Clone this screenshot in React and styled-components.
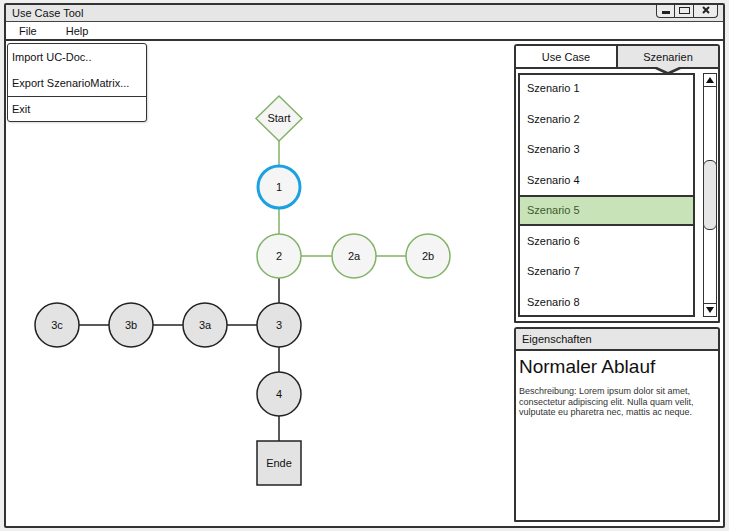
import React from 'react'
import styled, { createGlobalStyle } from 'styled-components'

const GlobalStyle = createGlobalStyle`
    html, body {
        margin: 0;
        padding: 0;
        background: #efefef;
        font-family: "Liberation Sans", Arial, sans-serif;
        color: #111;
    }
    * { box-sizing: border-box; }
`

const Window = styled.div`
    margin: 3px 0 0 4px;
    width: 721px;
    height: 525px;
    border: 2px solid #333;
    border-radius: 2px;
    background: #fff;
    display: flex;
    flex-direction: column;
    overflow: hidden;
`

const TitleBar = styled.div`
    height: 17px;
    background: #e6e6e6;
    border-bottom: 1px solid #444;
    display: flex;
    align-items: center;
    justify-content: space-between;
    padding-left: 6px;
    font-size: 11px;
`

const Controls = styled.div`
    display: flex;
    align-self: flex-start;
    margin: -2px 5px 0 0;
    height: 15px;
    border: 1.5px solid #333;
    border-top: none;
    border-radius: 0 0 4px 4px;
    background: #ececec;
`

const ControlButton = styled.div`
    width: ${p => p.$w}px;
    display: flex;
    align-items: center;
    justify-content: center;
    & + & { border-left: 1.5px solid #333; }
`

const MinGlyph = styled.span`
    width: 8px;
    height: 2.5px;
    background: #222;
    margin-top: 5px;
`

const MaxGlyph = styled.span`
    width: 11px;
    height: 7px;
    border: 1.5px solid #222;
`

const MenuBar = styled.div`
    height: 19px;
    border-bottom: 2px solid #333;
    display: flex;
    align-items: center;
    gap: 29px;
    padding-left: 13px;
    font-size: 11px;
`

const Body = styled.div`
    flex: 1;
    display: flex;
    min-height: 0;
`

const Canvas = styled.div`
    flex: 1;
    position: relative;
`

const DropMenu = styled.div`
    position: absolute;
    left: 1px;
    top: 2px;
    width: 140px;
    border: 1.5px solid #333;
    border-radius: 3px;
    background: #fff;
    font-size: 11px;
    box-shadow: 1px 1px 2px rgba(0, 0, 0, 0.15);
`

const DropItem = styled.div`
    height: ${p => p.$h || 26}px;
    display: flex;
    align-items: center;
    padding-left: 4px;
    ${p => p.$divided && 'border-top: 1.5px solid #333;'}
`

const Sidebar = styled.div`
    width: 211px;
    padding: 3px 3px 4px 2px;
    display: flex;
    flex-direction: column;
    gap: 4px;
`

const Panel = styled.div`
    border: 2px solid #333;
    border-radius: 3px 3px 1px 1px;
    display: flex;
    flex-direction: column;
    ${p => p.$grow ? 'flex: 1;' : `height: ${p.$h}px;`}
`

const Tabs = styled.div`
    display: flex;
    height: 23px;
    border-bottom: 2px solid #333;
`

const Tab = styled.div`
    flex: 1;
    position: relative;
    display: flex;
    align-items: center;
    justify-content: center;
    font-size: 11px;
    background: ${p => p.$active ? '#e6e6e6' : '#fff'};
    & + & { border-left: 2px solid #333; }
    ${p => p.$active && `
        &::before {
            content: '';
            position: absolute;
            left: 50%;
            bottom: -8px;
            margin-left: -13px;
            border-left: 13px solid transparent;
            border-right: 13px solid transparent;
            border-top: 6px solid #333;
            z-index: 1;
        }
        &::after {
            content: '';
            position: absolute;
            left: 50%;
            bottom: -5px;
            margin-left: -11px;
            border-left: 11px solid transparent;
            border-right: 11px solid transparent;
            border-top: 5px solid #e6e6e6;
            z-index: 2;
        }
    `}
`

const TabBody = styled.div`
    flex: 1;
    display: flex;
    gap: 8px;
    padding: 4px 1px 4px 2px;
    min-height: 0;
`

const ListBox = styled.div`
    flex: 1;
    border: 2px solid #333;
    overflow: hidden;
`

const ListInner = styled.div`
    margin-top: -2px;
`

const ListItem = styled.div`
    height: 30.5px;
    display: flex;
    align-items: center;
    padding-left: 7px;
    font-size: 11px;
    ${p => p.$selected && `
        background: #c9e3b9;
        color: #3d5a2d;
        border-top: 2px solid #333;
        border-bottom: 2px solid #333;
    `}
`

const Scrollbar = styled.div`
    width: 14px;
    border: 1.5px solid #333;
    display: flex;
    flex-direction: column;
    background: #fff;
`

const ScrollButton = styled.div`
    height: 13px;
    display: flex;
    align-items: center;
    justify-content: center;
    ${p => p.$top ? 'border-bottom: 1.5px solid #333;' : 'border-top: 1.5px solid #333; margin-top: auto;'}
`

const Arrow = styled.span`
    width: 0;
    height: 0;
    border-left: 4px solid transparent;
    border-right: 4px solid transparent;
    ${p => p.$up ? 'border-bottom: 6px solid #111;' : 'border-top: 6px solid #111;'}
`

const Thumb = styled.div`
    margin-top: 73px;
    height: 70px;
    margin-left: -1px;
    margin-right: -1px;
    border: 1.5px solid #333;
    border-radius: 6px;
    background: #e6e6e6;
`

const PanelHeader = styled.div`
    height: 22px;
    background: #e6e6e6;
    border-bottom: 2px solid #333;
    display: flex;
    align-items: center;
    padding-left: 6px;
    font-size: 11px;
`

const PanelContent = styled.div`
    padding: 5px 4px 4px 3px;
`

const Heading = styled.div`
    font-size: 19px;
    line-height: 22px;
`

const Description = styled.p`
    margin: 8px 0 0;
    font-size: 9px;
    line-height: 10.5px;
    color: #333;
`

const green = '#82b366'
const dark = '#222'

const nodes = [
    { id: '2', x: 279, y: 256, kind: 'green' },
    { id: '2a', x: 354, y: 256, kind: 'green' },
    { id: '2b', x: 428, y: 256, kind: 'green' },
    { id: '3', x: 279, y: 325, kind: 'gray' },
    { id: '3a', x: 205, y: 325, kind: 'gray' },
    { id: '3b', x: 131, y: 325, kind: 'gray' },
    { id: '3c', x: 57, y: 325, kind: 'gray' },
    { id: '4', x: 279, y: 394, kind: 'gray' },
]

const edges = [
    [279, 141, 279, 165, green],
    [279, 209, 279, 234, green],
    [301, 256, 332, 256, green],
    [376, 256, 406, 256, green],
    [279, 278, 279, 303, dark],
    [257, 325, 227, 325, dark],
    [183, 325, 153, 325, dark],
    [109, 325, 79, 325, dark],
    [279, 347, 279, 372, dark],
    [279, 416, 279, 441, dark],
]

const Label = ({ x, y, children }) => (
    <text x={x} y={y + 4} textAnchor="middle" fontSize="11" fontFamily="Liberation Sans, Arial, sans-serif" fill="#111">
        {children}
    </text>
)

const Diagram = () => (
    <svg width="506" height="485" viewBox="6 41 506 485">
        {edges.map(([x1, y1, x2, y2, c], i) => (
            <line key={i} x1={x1} y1={y1} x2={x2} y2={y2} stroke={c} strokeWidth="1.5" />
        ))}
        <polygon points="279,96 302,118.5 279,141 256,118.5" fill="#f5f5f5" stroke={green} strokeWidth="1.5" />
        <Label x={279} y={118}>Start</Label>
        <circle cx="279" cy="187" r="21" fill="#f5f5f5" stroke="#1ba1e2" strokeWidth="3" />
        <Label x={279} y={187}>1</Label>
        {nodes.map(n => (
            <g key={n.id}>
                <circle
                    cx={n.x}
                    cy={n.y}
                    r="22"
                    fill={n.kind === 'green' ? '#f5f5f5' : '#e3e3e3'}
                    stroke={n.kind === 'green' ? green : dark}
                    strokeWidth="1.5"
                />
                <Label x={n.x} y={n.y}>{n.id}</Label>
            </g>
        ))}
        <rect x="257" y="441" width="44" height="44" fill="#e3e3e3" stroke={dark} strokeWidth="1.5" />
        <Label x={279} y={463}>Ende</Label>
    </svg>
)

const scenarios = [1, 2, 3, 4, 5, 6, 7, 8]

const App = () => (
    <>
        <GlobalStyle />
        <Window>
            <TitleBar>
                <span>Use Case Tool</span>
                <Controls>
                    <ControlButton $w={17}><MinGlyph /></ControlButton>
                    <ControlButton $w={19}><MaxGlyph /></ControlButton>
                    <ControlButton $w={24}>
                        <svg width="8" height="8" viewBox="0 0 8 8">
                            <path d="M1 1 L7 7 M7 1 L1 7" stroke="#222" strokeWidth="2" />
                        </svg>
                    </ControlButton>
                </Controls>
            </TitleBar>
            <MenuBar>
                <span>File</span>
                <span>Help</span>
            </MenuBar>
            <Body>
                <Canvas>
                    <Diagram />
                    <DropMenu>
                        <DropItem>Import UC-Doc..</DropItem>
                        <DropItem>Export SzenarioMatrix...</DropItem>
                        <DropItem $divided $h={25}>Exit</DropItem>
                    </DropMenu>
                </Canvas>
                <Sidebar>
                    <Panel $h={279}>
                        <Tabs>
                            <Tab>Use Case</Tab>
                            <Tab $active>Szenarien</Tab>
                        </Tabs>
                        <TabBody>
                            <ListBox>
                                <ListInner>
                                    {scenarios.map(n => (
                                        <ListItem key={n} $selected={n === 5}>Szenario {n}</ListItem>
                                    ))}
                                </ListInner>
                            </ListBox>
                            <Scrollbar>
                                <ScrollButton $top><Arrow $up /></ScrollButton>
                                <Thumb />
                                <ScrollButton><Arrow /></ScrollButton>
                            </Scrollbar>
                        </TabBody>
                    </Panel>
                    <Panel $grow>
                        <PanelHeader>Eigenschaften</PanelHeader>
                        <PanelContent>
                            <Heading>Normaler Ablauf</Heading>
                            <Description>
                                Beschreibung: Lorem ipsum dolor sit amet, consectetur adipiscing elit. Nulla quam velit, vulputate eu pharetra nec, mattis ac neque.
                            </Description>
                        </PanelContent>
                    </Panel>
                </Sidebar>
            </Body>
        </Window>
    </>
)

export default App
